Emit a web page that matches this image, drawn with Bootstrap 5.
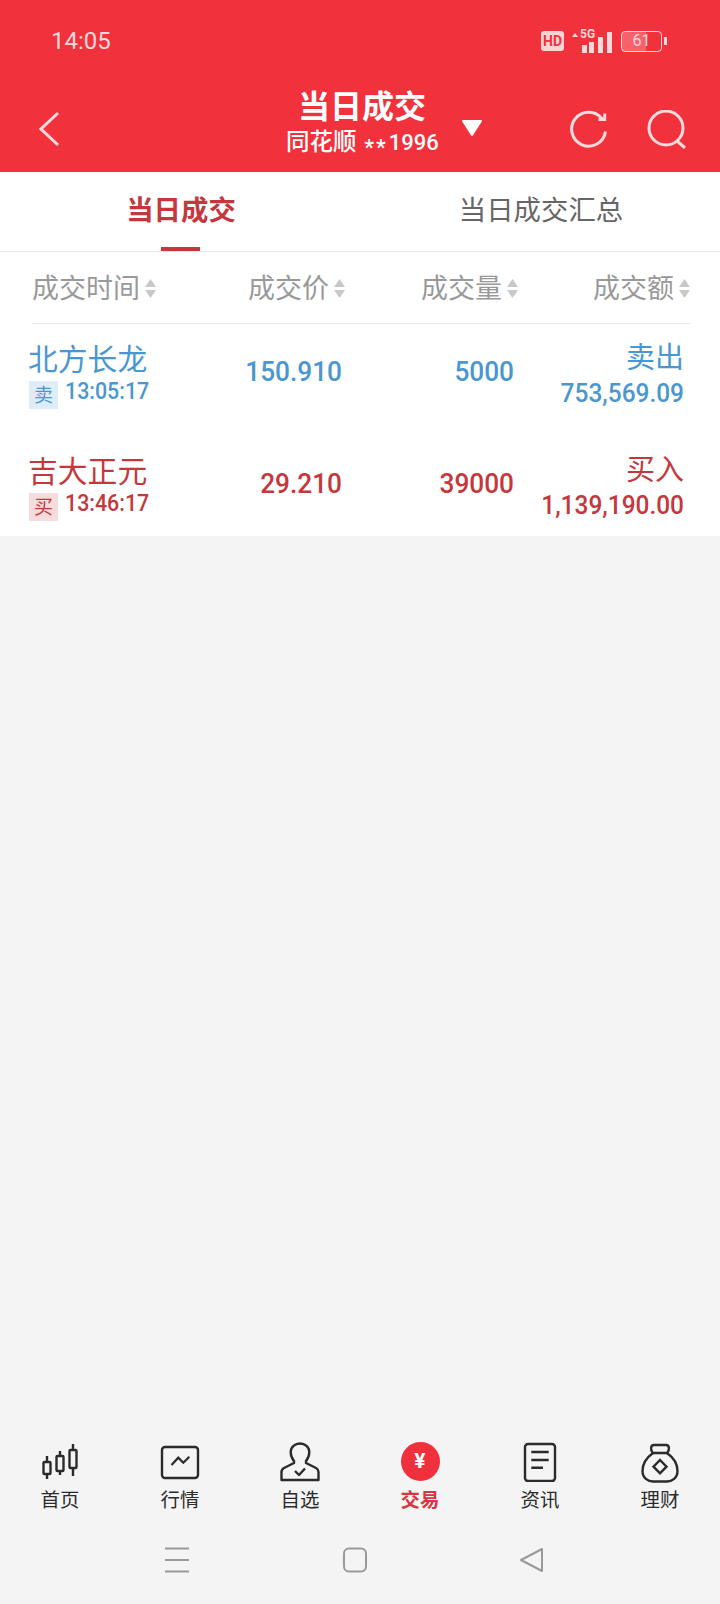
<!DOCTYPE html>
<html lang="zh-CN">
<head>
    <meta charset="UTF-8">
    <meta name="viewport" content="width=device-width, initial-scale=1.0">
    <title>当日成交</title>

    <link rel="stylesheet" href="https://cdn.jsdelivr.net/npm/bootstrap@5.3.3/dist/css/bootstrap.min.css">

    <style>
        body {
            margin: 0;
            background: #f4f4f4;
            font-family: Roboto, "Noto Sans CJK SC", sans-serif;
        }

        .page-wrap { width: 720px; height: 1604px; }

        /* red top part */
        .top-red { background: #f1313b; color: #fff; height: 172px; }
        .status-line { height: 82px; padding: 0 53px 0 51px; color: #fbd8da; }
        .clock { font-size: 24px; line-height: 1; }
        .hd-box { width: 23px; height: 20px; background: #fcd5d7; color: #f1313b; border-radius: 3px; font-size: 14px; font-weight: 700; line-height: 20px; text-align: center; }
        .net-box { width: 41px; height: 24px; margin-left: 7px; }
        .net-5g { left: 9px; top: 0; font-size: 12px; font-weight: 700; line-height: 11px; }
        .batt { width: 41px; height: 21px; margin-left: 9px; border: 1.5px solid #fbd8da; border-radius: 4px; font-size: 16px; line-height: 18px; text-align: center; background: linear-gradient(to right, #f7626a 62%, transparent 62%); }
        .batt-nub { width: 3px; height: 8px; background: #fbd8da; margin-left: 2px; }

        .title-line { height: 90px; padding: 4px 34px 0 39px; }
        .title-box { margin-left: 225px; margin-top: -6px; width: 152px; text-align: center; }
        .title-main { font-size: 32px; font-weight: 700; line-height: 36px; margin-bottom: 2px; white-space: nowrap; }
        .title-sub { font-size: 23.5px; font-weight: 500; line-height: 30px; white-space: nowrap; }
        .title-stars { vertical-align: -5px; font-size: 22px; letter-spacing: 2px; margin: 0 1px 0 2px; }
        .title-digits { font-size: 22px; }
        .title-arrow { margin-left: 24px; margin-top: -2px; }
        .top-actions { gap: 40px; }

        /* tabs */
        .tab-bar { background: #fff; height: 80px; border-bottom: 1px solid #e8e8e8; }
        .tab-text { font-size: 27.4px; line-height: 36px; padding: 21px 0 0 2px; color: #666; }
        .tab-on { color: #c4383d; font-weight: 700; }
        .tab-mark { width: 39px; height: 4px; background: #c4383d; margin: 18px auto 0; }

        /* table */
        .deal-box { background: #fff; height: 284px; }
        .deal-head {
            display: grid;
            grid-template-columns: 180px 133px 173px 172px;
            height: 72px;
            margin: 0 30px 0 32px;
            border-bottom: 1px solid #e8e8e8;
            color: #999;
            font-size: 27px;
            line-height: 36px;
            padding-top: 2px;
        }
        .sort-mark { margin-left: 5px; }
        .deal-rows { gap: 12px; }
        .deal-row {
            display: grid;
            grid-template-columns: 180px 133px 172px 170px;
            padding: 18px 0 15px 29px;
        }
        .sell { color: #4a97d0; }
        .buy { color: #c4383d; }
        .stock-name { font-size: 29.8px; line-height: 36px; white-space: nowrap; margin-left: -1px; }
        .stock-meta { margin-top: 3px; }
        .side-tag { width: 29px; height: 28px; font-size: 19px; line-height: 30px; text-align: center; margin-right: 7px; }
        .sell .side-tag { background: #dfedf8; }
        .buy .side-tag { background: #f7dcdd; }
        /* the digits in the app are a narrow face, Roboto squeezed a bit comes closest */
        .deal-time { font-size: 23px; line-height: 22px; font-weight: 500; transform: scaleX(.93); transform-origin: left center; white-space: nowrap; }
        .num-cell { font-size: 28.5px; line-height: 36px; padding-top: 12px; text-align: right; font-weight: 500; transform: scaleX(.92); transform-origin: right center; }
        .side-text { font-size: 29px; line-height: 32px; text-align: right; }
        .amount-text { font-size: 26px; line-height: 28px; margin-top: 5px; text-align: right; font-weight: 500; white-space: nowrap; transform: scaleX(.94); transform-origin: right center; }

        /* bottom tabs */
        .tab-grid { height: 74px; margin-bottom: 15px; }
        .tab-item { width: 120px; color: #2b2b2b; font-size: 19.4px; line-height: 24px; }
        .tab-icon { height: 40px; margin-bottom: 7px; }
        .tab-now { color: #d9353f; font-weight: 700; }
        .yuan-dot { width: 39px; height: 39px; background: #f0303c; color: #fff; font-size: 21px; font-weight: 700; line-height: 39px; text-align: center; }

        /* android keys */
        .sys-keys { height: 73px; padding-top: 16px; padding-right: 12px; }
        .sys-keys svg { display: block; }
        .key-mid { margin-left: 152px; }
        .key-back { margin-left: 150px; }
    </style>
</head>
<body>

<div class="page-wrap d-flex flex-column">

    <!-- red header -->
    <div class="top-red">
        <div class="status-line d-flex align-items-center justify-content-between">
            <div class="clock">14:05</div>
            <div class="d-flex align-items-center">
                <div class="hd-box">HD</div>
                <div class="net-box position-relative">
                    <svg width="41" height="24" viewBox="0 0 41 24">
                        <path d="M1 7 L4 3 L7 7 Z" fill="#fbd8da"/>
                        <rect x="11" y="15" width="5" height="8" fill="#fbd8da"/>
                        <rect x="18" y="12" width="5" height="11" fill="#fbd8da"/>
                        <rect x="27" y="7" width="5" height="16" fill="#fbd8da"/>
                        <rect x="36" y="2" width="5" height="21" fill="#fbd8da"/>
                    </svg>
                    <span class="net-5g position-absolute">5G</span>
                </div>
                <div class="batt">61</div>
                <div class="batt-nub"></div>
            </div>
        </div>
        <div class="title-line d-flex align-items-center">
            <svg width="22" height="36" viewBox="0 0 22 36">
                <polyline points="19,2 2,18 19,34" fill="none" stroke="#fbdcdd" stroke-width="3"/>
            </svg>
            <div class="title-box">
                <div class="title-main">当日成交</div>
                <div class="title-sub">同花顺 <span class="title-stars">**</span><span class="title-digits">1996</span></div>
            </div>
            <svg class="title-arrow" width="20" height="16" viewBox="0 0 20 16">
                <path d="M1 1 H19 L10 15 Z" fill="#fff" stroke="#fff" stroke-width="2" stroke-linejoin="round"/>
            </svg>
            <div class="top-actions d-flex align-items-center ms-auto">
                <svg width="38" height="38" viewBox="0 0 38 38">
                    <path d="M36.5 21.5 A17 17 0 1 1 33.5 9.3" fill="none" stroke="#fbdcdd" stroke-width="3"/>
                    <polyline points="29.5,9.5 35.7,9.5 35.7,3.5" fill="none" stroke="#fbdcdd" stroke-width="3"/>
                </svg>
                <svg width="39" height="39" viewBox="0 0 39 39">
                    <circle cx="19" cy="18" r="17" fill="none" stroke="#fbdcdd" stroke-width="3"/>
                    <line x1="30" y1="31" x2="38" y2="38" stroke="#fbdcdd" stroke-width="3"/>
                </svg>
            </div>
        </div>
    </div>

    <!-- tabs -->
    <div class="tab-bar row g-0">
        <div class="col-6 text-center">
            <div class="tab-text tab-on">当日成交</div>
            <div class="tab-mark"></div>
        </div>
        <div class="col-6 text-center">
            <div class="tab-text">当日成交汇总</div>
        </div>
    </div>

    <!-- deals -->
    <div class="deal-box">
        <div class="deal-head">
            <div class="d-flex align-items-center">成交时间<svg class="sort-mark" width="11" height="19" viewBox="0 0 11 19"><path d="M5.5 0 L11 8 H0 Z M5.5 19 L11 11 H0 Z" fill="#c8c8c8"/></svg></div>
            <div class="d-flex align-items-center justify-content-end">成交价<svg class="sort-mark" width="11" height="19" viewBox="0 0 11 19"><path d="M5.5 0 L11 8 H0 Z M5.5 19 L11 11 H0 Z" fill="#c8c8c8"/></svg></div>
            <div class="d-flex align-items-center justify-content-end">成交量<svg class="sort-mark" width="11" height="19" viewBox="0 0 11 19"><path d="M5.5 0 L11 8 H0 Z M5.5 19 L11 11 H0 Z" fill="#c8c8c8"/></svg></div>
            <div class="d-flex align-items-center justify-content-end">成交额<svg class="sort-mark" width="11" height="19" viewBox="0 0 11 19"><path d="M5.5 0 L11 8 H0 Z M5.5 19 L11 11 H0 Z" fill="#c8c8c8"/></svg></div>
        </div>
        <div class="deal-rows d-flex flex-column">
            <div class="deal-row sell">
                <div>
                    <div class="stock-name">北方长龙</div>
                    <div class="stock-meta d-flex align-items-start">
                        <div class="side-tag">卖</div>
                        <div class="deal-time">13:05:17</div>
                    </div>
                </div>
                <div class="num-cell">150.910</div>
                <div class="num-cell">5000</div>
                <div>
                    <div class="side-text">卖出</div>
                    <div class="amount-text">753,569.09</div>
                </div>
            </div>
            <div class="deal-row buy">
                <div>
                    <div class="stock-name">吉大正元</div>
                    <div class="stock-meta d-flex align-items-start">
                        <div class="side-tag">买</div>
                        <div class="deal-time">13:46:17</div>
                    </div>
                </div>
                <div class="num-cell">29.210</div>
                <div class="num-cell">39000</div>
                <div>
                    <div class="side-text">买入</div>
                    <div class="amount-text">1,139,190.00</div>
                </div>
            </div>
        </div>
    </div>

    <div class="flex-grow-1"></div>

    <!-- bottom tabs -->
    <div class="tab-grid d-flex">
        <div class="tab-item text-center">
            <div class="tab-icon d-flex justify-content-center">
                <svg width="40" height="40" viewBox="0 0 40 40" fill="none" stroke="#2b2b2b" stroke-width="2.4">
                    <rect x="3.5" y="20" width="7" height="12" rx="1"/><path d="M7 14 V20 M7 32 V37"/>
                    <rect x="16.5" y="14" width="7" height="15" rx="1"/><path d="M20 9 V14 M20 29 V33"/>
                    <rect x="29.5" y="8" width="7" height="18" rx="1"/><path d="M33 2 V8 M33 26 V34"/>
                </svg>
            </div>
            <div>首页</div>
        </div>
        <div class="tab-item text-center">
            <div class="tab-icon d-flex justify-content-center">
                <svg width="40" height="40" viewBox="0 0 40 40" fill="none" stroke="#2b2b2b">
                    <rect x="2" y="5" width="36" height="31" rx="3" stroke-width="2.4"/>
                    <polyline points="11.5,23 18.3,15.7 23.3,20.7 29.3,14.7" stroke-width="2.2"/>
                </svg>
            </div>
            <div>行情</div>
        </div>
        <div class="tab-item text-center">
            <div class="tab-icon d-flex justify-content-center">
                <svg width="40" height="40" viewBox="0 0 40 40" fill="none" stroke="#2b2b2b" stroke-width="2.4" stroke-linejoin="round">
                    <path d="M14 19 C11.5 16 10.7 13 10.7 10 C10.7 5 15 1.5 20 1.5 C25 1.5 29.3 5 29.3 10 C29.3 13 28.5 16 26 19 L26 21 L36 26 Q38.5 27.5 38.5 30 V38 H1.5 V30 Q1.5 27.5 4 26 L14 21 Z"/>
                    <polyline points="15,29 19,33 25,26.5"/>
                </svg>
            </div>
            <div>自选</div>
        </div>
        <div class="tab-item text-center tab-now">
            <div class="tab-icon d-flex justify-content-center">
                <div class="yuan-dot rounded-circle">¥</div>
            </div>
            <div>交易</div>
        </div>
        <div class="tab-item text-center">
            <div class="tab-icon d-flex justify-content-center">
                <svg width="40" height="40" viewBox="0 0 40 40" fill="none" stroke="#2b2b2b" stroke-width="2.4">
                    <rect x="5" y="2" width="30" height="37" rx="3"/>
                    <path d="M11.3 10 H28.7 M11.3 18 H28.7 M11.3 25.7 H23"/>
                </svg>
            </div>
            <div>资讯</div>
        </div>
        <div class="tab-item text-center">
            <div class="tab-icon d-flex justify-content-center">
                <svg width="40" height="41" viewBox="0 0 40 41" fill="none" stroke="#2b2b2b" stroke-width="2.4">
                    <path d="M13 11 C6 16 2.5 23 2.5 29 C2.5 36 8 39.5 13 39.5 H27 C32 39.5 37.5 36 37.5 29 C37.5 23 34 16 27 11"/>
                    <path d="M13 11 C10 8 10.5 3 14 3 H26 C29.5 3 30 8 27 11 Z"/>
                    <path d="M20 18 L26.5 24.7 L20 31.4 L13.5 24.7 Z"/>
                </svg>
            </div>
            <div>理财</div>
        </div>
    </div>

    <!-- android keys -->
    <div class="sys-keys d-flex justify-content-center">
        <div class="d-flex align-items-start">
            <svg width="26" height="26" viewBox="0 0 26 26" fill="none" stroke="#999" stroke-width="2">
                <path d="M1 1.5 H25 M1 13 H25 M1 24.5 H25"/>
            </svg>
            <svg class="key-mid" width="26" height="26" viewBox="0 0 26 26" fill="none" stroke="#999" stroke-width="2">
                <rect x="2" y="1.5" width="22" height="23" rx="5"/>
            </svg>
            <svg class="key-back" width="26" height="26" viewBox="0 0 26 26" fill="none" stroke="#999" stroke-width="2" stroke-linejoin="round">
                <path d="M24 2 V24 L3 13 Z"/>
            </svg>
        </div>
    </div>

</div>

<script src="https://cdn.jsdelivr.net/npm/bootstrap@5.3.3/dist/js/bootstrap.bundle.min.js"></script>
</body>
</html>
